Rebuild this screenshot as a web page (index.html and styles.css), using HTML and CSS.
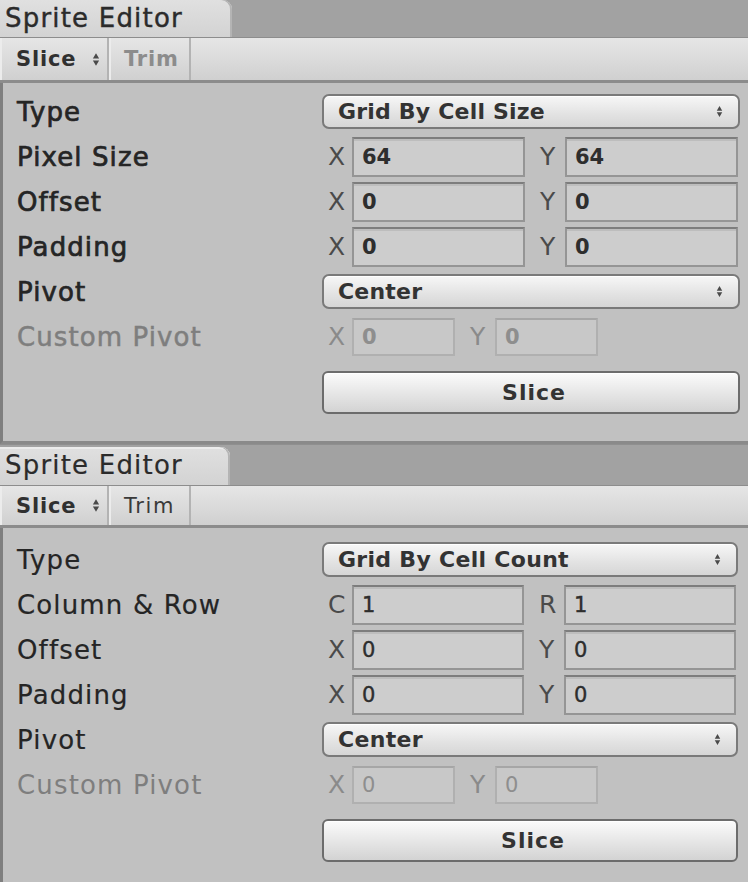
FILE: index.html
```html
<!DOCTYPE html>
<html>
<head>
<meta charset="utf-8">
<link rel="stylesheet" href="styles.css">
</head>
<body>
<div class="window p1">
  <div class="tabbar"><div class="tab">Sprite Editor</div></div>
  <div class="toolbar">
    <div class="tbtn slice-btn">Slice <svg class="updown" viewBox="0 0 9 16"><path d="M1 7 L4.5 1 L8 7 Z M1 9 L4.5 15 L8 9 Z"/></svg></div>
    <div class="tbtn trim-btn disabled">Trim</div>
  </div>
  <div class="content">
    <div class="label">Type</div>
    <div class="dropdown"><span class="dd-text">Grid By Cell Size</span><svg class="updown" viewBox="0 0 9 16"><path d="M1 7 L4.5 1 L8 7 Z M1 9 L4.5 15 L8 9 Z"/></svg></div>

    <div class="label">Pixel Size</div>
    <div class="vec"><span class="axis a1">X</span><div class="field">64</div><span class="axis a2">Y</span><div class="field">64</div></div>

    <div class="label">Offset</div>
    <div class="vec"><span class="axis a1">X</span><div class="field">0</div><span class="axis a2">Y</span><div class="field">0</div></div>

    <div class="label">Padding</div>
    <div class="vec"><span class="axis a1">X</span><div class="field">0</div><span class="axis a2">Y</span><div class="field">0</div></div>

    <div class="label">Pivot</div>
    <div class="dropdown"><span class="dd-text">Center</span><svg class="updown" viewBox="0 0 9 16"><path d="M1 7 L4.5 1 L8 7 Z M1 9 L4.5 15 L8 9 Z"/></svg></div>

    <div class="label disabled">Custom Pivot</div>
    <div class="vec small disabled"><span class="axis a1">X</span><div class="field">0</div><span class="axis a2">Y</span><div class="field">0</div></div>

    <div class="spacer"></div>
    <div class="button">Slice</div>
  </div>
</div>

<div class="window p2">
  <div class="tabbar"><div class="tab">Sprite Editor</div></div>
  <div class="toolbar">
    <div class="tbtn slice-btn">Slice <svg class="updown" viewBox="0 0 9 16"><path d="M1 7 L4.5 1 L8 7 Z M1 9 L4.5 15 L8 9 Z"/></svg></div>
    <div class="tbtn trim-btn">Trim</div>
  </div>
  <div class="content">
    <div class="label">Type</div>
    <div class="dropdown"><span class="dd-text">Grid By Cell Count</span><svg class="updown" viewBox="0 0 9 16"><path d="M1 7 L4.5 1 L8 7 Z M1 9 L4.5 15 L8 9 Z"/></svg></div>

    <div class="label">Column &amp; Row</div>
    <div class="vec"><span class="axis a1">C</span><div class="field">1</div><span class="axis a2">R</span><div class="field">1</div></div>

    <div class="label">Offset</div>
    <div class="vec"><span class="axis a1">X</span><div class="field">0</div><span class="axis a2">Y</span><div class="field">0</div></div>

    <div class="label">Padding</div>
    <div class="vec"><span class="axis a1">X</span><div class="field">0</div><span class="axis a2">Y</span><div class="field">0</div></div>

    <div class="label">Pivot</div>
    <div class="dropdown"><span class="dd-text">Center</span><svg class="updown" viewBox="0 0 9 16"><path d="M1 7 L4.5 1 L8 7 Z M1 9 L4.5 15 L8 9 Z"/></svg></div>

    <div class="label disabled">Custom Pivot</div>
    <div class="vec small disabled"><span class="axis a1">X</span><div class="field">0</div><span class="axis a2">Y</span><div class="field">0</div></div>

    <div class="spacer"></div>
    <div class="button">Slice</div>
  </div>
</div>
</body>
</html>
```
FILE: styles.css
```css
* { box-sizing: border-box; }

html, body {
  margin: 0;
  padding: 0;
}

body {
  width: 748px;
  height: 882px;
  overflow: hidden;
  background: #c0c0c0;
  font-family: "DejaVu Sans", "Liberation Sans", sans-serif;
  color: #262626;
}

/* ---------- tab bar ---------- */
.tabbar {
  height: 38px;
  background: #a2a2a2;
  border-bottom: 1px solid #8d8d8d;
  display: flex;
  align-items: flex-end;
}

.tab {
  width: 232px;
  height: 37px;
  background: linear-gradient(#e0e0e0, #d3d3d3);
  border-top-right-radius: 9px;
  box-shadow: inset -2px 0 0 #b4b4b4;
  font-size: 26px;
  letter-spacing: 1.2px;
  padding-left: 5px;
  line-height: 37px;
  color: #2b2b2b;
  white-space: nowrap;
  -webkit-text-stroke: 0.4px #2b2b2b;
}

.p2 .tabbar {
  height: 42px;
  border-top: 1px solid #8f8f8f;
}

.p2 .tab {
  width: 230px;
  height: 38px;
  box-shadow: inset -2px 0 0 #b4b4b4, inset 0 2px 0 #ececec;
  -webkit-text-stroke: 0.2px #2b2b2b;
}

/* ---------- toolbar ---------- */
.toolbar {
  height: 45px;
  display: flex;
  background: linear-gradient(#e6e6e6, #d0d0d0);
  border-bottom: 3px solid #8c8c8c;
}

.p2 .toolbar {
  height: 42px;
}

.tbtn {
  display: flex;
  align-items: center;
  height: 100%;
  font-size: 21px;
  font-weight: bold;
  letter-spacing: 0.8px;
  color: #303030;
  border-right: 2px solid #b3b3b3;
  box-shadow: inset 2px 0 0 #ececec;
}

.slice-btn {
  width: 109px;
  padding-left: 16px;
  gap: 16px;
}

.trim-btn {
  width: 82px;
  padding-left: 15px;
}

.tbtn.disabled {
  color: #8c8c8c;
}

.p2 .trim-btn {
  font-weight: normal;
  letter-spacing: 1.6px;
  color: #3a3a3a;
}

.updown {
  width: 8px;
  height: 15px;
  fill: #4a4a4a;
  flex: none;
}

/* ---------- content ---------- */
.content {
  display: grid;
  grid-template-columns: 305px 1fr;
  grid-auto-rows: 45px;
  align-items: center;
  background: #c1c1c1;
  border-left: 3px solid #7f7f7f;
  padding: 6px 8px 37px 14px;
}

.p1 .content {
  border-bottom: 3px solid #8a8a8a;
}

.p2 .content {
  padding-top: 9px;
  padding-right: 10px;
}

.label {
  font-size: 26px;
  letter-spacing: 1.1px;
  color: #252525;
  white-space: nowrap;
  -webkit-text-stroke: 0.7px #252525;
}

.p2 .label {
  -webkit-text-stroke: 0.2px #252525;
  letter-spacing: 1.15px;
}

.label.disabled {
  color: #7e7e7e;
  -webkit-text-stroke: 0.5px #7e7e7e;
}

.p2 .label.disabled {
  -webkit-text-stroke: 0;
}

/* dropdown */
.dropdown {
  height: 35px;
  border: 2px solid #7a7a7a;
  border-radius: 7px;
  background: linear-gradient(#f7f7f7, #e2e2e2 60%, #d6d6d6);
  box-shadow: inset 0 1px 0 #ffffff;
  display: flex;
  align-items: center;
  justify-content: space-between;
  padding: 0 15px 0 14px;
}

.dd-text {
  font-size: 22px;
  font-weight: bold;
  letter-spacing: 0.2px;
  color: #333;
  white-space: nowrap;
}

.p2 .dd-text {
  letter-spacing: 0.3px;
}

.dropdown .updown {
  width: 7px;
  height: 15px;
}

/* vector fields */
.vec {
  display: flex;
  align-items: center;
  padding-right: 2px;
}

.axis {
  font-size: 25px;
  color: #4a4a4a;
  flex: none;
}

.axis.a1 {
  width: 30px;
  padding-left: 6px;
}

.axis.a2 {
  width: 40px;
  padding-left: 15px;
}

.field {
  flex: 1;
  height: 40px;
  background: #cdcdcd;
  border: 2px solid #959595;
  border-top-color: #7d7d7d;
  box-shadow: inset 0 2px 0 #bdbdbd;
  font-size: 21px;
  font-weight: bold;
  color: #2e2e2e;
  padding-left: 8px;
  line-height: 36px;
}

.vec.small .field {
  flex: none;
  width: 103px;
  height: 38px;
  line-height: 34px;
}

.vec.disabled .axis {
  color: #8a8a8a;
}

.vec.disabled .field {
  background: #c8c8c8;
  border-color: #b0b0b0;
  border-top-color: #a6a6a6;
  box-shadow: none;
  color: #8e8e8e;
}

.p2 .field {
  font-weight: normal;
  -webkit-text-stroke: 0.4px #2e2e2e;
}

.p2 .vec.disabled .field {
  -webkit-text-stroke: 0;
}

/* slice button */
.spacer {
  height: 100%;
}

.button {
  align-self: end;
  height: 43px;
  border: 2px solid #6c6c6c;
  border-radius: 6px;
  background: linear-gradient(#fbfbfb, #e9e9e9 45%, #d3d3d3);
  box-shadow: inset 0 1px 0 #ffffff;
  display: flex;
  align-items: center;
  justify-content: center;
  font-size: 22px;
  font-weight: bold;
  letter-spacing: 1px;
  color: #333;
  margin-bottom: -10px;
  padding-left: 6px;
}
```
